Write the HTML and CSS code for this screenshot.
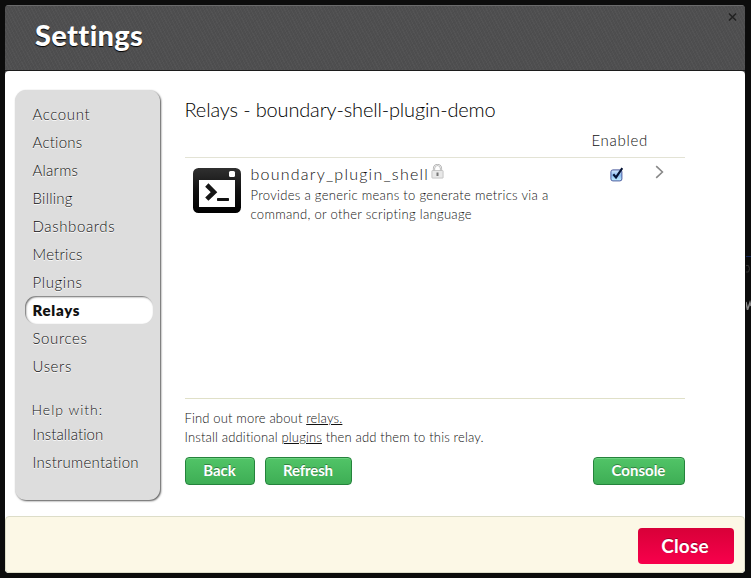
FILE: index.html
```html
<!DOCTYPE html>
<html lang="en">
<head>
<meta charset="utf-8">
<title>Settings</title>
<link rel="stylesheet" href="styles.css">
</head>
<body>
<svg class="behind" width="5" height="60" viewBox="0 0 5 60"><path d="M0 6.500h5" stroke="#14285a"/><path d="M0 15.500h2.500q2 3 0 6.500H0" fill="none" stroke="#333"/><path d="M0 52l1.500 8L4 52.500 5 56" fill="none" stroke="#8a8a8a" stroke-width="1.500"/></svg>
<div class="dialog">
  <header class="header">
    <h1>Settings</h1>
    <svg class="dismiss" width="9" height="8" viewBox="0 0 9 8"><path d="M1 .5 8 7.500M8 .5 1 7.500"/></svg>
  </header>
  <main class="body">
    <nav class="sidebar">
      <a class="item wide">Account</a>
      <a class="item">Actions</a>
      <a class="item">Alarms</a>
      <a class="item">Billing</a>
      <a class="item wide">Dashboards</a>
      <a class="item">Metrics</a>
      <a class="item wide">Plugins</a>
      <a class="item active">Relays</a>
      <a class="item wide">Sources</a>
      <a class="item wide">Users</a>
      <div class="help">Help with:</div>
      <a class="item snug">Installation</a>
      <a class="item">Instrumentation</a>
    </nav>
    <section class="content">
      <h2>Relays - boundary-shell-plugin-demo</h2>
      <div class="columns"><span>Enabled</span></div>
      <div class="list">
        <div class="row">
          <svg class="plugin-icon" width="48" height="45" viewBox="0 0 48 45">
            <defs><linearGradient id="ink" x1="0" y1="0" x2="0" y2="1"><stop offset="0" stop-color="#303030"/><stop offset=".5" stop-color="#111"/><stop offset="1" stop-color="#000"/></linearGradient></defs>
            <rect width="48" height="45" rx="5.500" fill="url(#ink)"/>
            <rect x="6" y="12" width="36" height="27" fill="#fff"/>
            <rect x="36" y="3" width="6" height="6" rx="1.500" fill="#fff"/>
            <path d="M13.800 17 21 24.200 13.800 31.200" fill="none" stroke="#161616" stroke-width="4.600"/>
            <rect x="24" y="30" width="12" height="3" rx=".7" fill="#111"/>
          </svg>
          <div class="info">
            <div class="name"><span>boundary_plugin_shell</span><svg width="13" height="15" viewBox="0 0 13 15"><path d="M3 7V4.500a3.500 3.500 0 0 1 7 0V7" fill="none" stroke="#aaa" stroke-width="2.200"/><path d="M3 7V4.500a3.500 3.500 0 0 1 7 0V7" fill="none" stroke="#eee" stroke-width=".9"/><rect x=".9" y="6.500" width="11.200" height="7.600" rx=".6" fill="#e8e8e8" stroke="#bbb" stroke-width=".8"/><path d="M5.500 8.600h2v3.400h-2z" fill="#777"/></svg></div>
            <p>Provides a generic means to generate metrics via a<br>command, or other scripting language</p>
          </div>
          <svg class="check" width="14" height="15" viewBox="0 0 14 15">
            <defs><linearGradient id="blue" x1="0" y1="0" x2="0" y2="1"><stop offset="0" stop-color="#d5e7fb"/><stop offset=".5" stop-color="#8fc0f3"/><stop offset="1" stop-color="#c4f0ff"/></linearGradient></defs>
            <rect x=".9" y="2.900" width="11" height="11" rx="2" fill="url(#blue)" stroke="#4d5c9e"/>
            <path d="M3.300 7.200 6 10.400 12.300 1.200" fill="none" stroke="#061436" stroke-width="2.100"/>
          </svg>
          <svg class="chevron" width="9" height="14" viewBox="0 0 9 14"><path d="M1.200 1.200 7.400 7 1.200 12.800"/></svg>
        </div>
      </div>
      <div class="notes">
        <div>Find out more about <u>relays.</u></div>
        <div class="install">Install additional <u>plugins</u> then add them to this relay.</div>
      </div>
      <div class="actions">
        <button class="back">Back</button>
        <button class="refresh">Refresh</button>
        <button class="console">Console</button>
      </div>
    </section>
  </main>
  <footer class="footer"><button class="close">Close</button></footer>
</div>
</body>
</html>
```
FILE: styles.css
```css
* { box-sizing: border-box; }
body {
  margin: 0;
  padding: 5px 6px 5px 5px;
  height: 578px;
  overflow: hidden;
  background: #0c0c0c;
  font-family: Lato, sans-serif;
  font-weight: 300;
  color: #111;
}
.behind { position: absolute; left: 746px; top: 250px; }
.dialog {
  width: 740px;
  height: 568px;
  display: flex;
  flex-direction: column;
  border-radius: 4px;
  overflow: hidden;
  background: #4d4d4e;
}
.header {
  height: 66px;
  padding: 12px 8px 0 30px;
  display: flex;
  justify-content: space-between;
  background:
    repeating-linear-gradient(63deg, #ffffff08 0 1px, transparent 1px 3px),
    repeating-linear-gradient(-38deg, #00000008 0 1px, transparent 1px 4px),
    #4e4e4f;
  border-top: 1px solid #6a6a6b;
  border-bottom: 1px solid #1c1c1c;
}
h1 {
  margin: 0;
  font-size: 29px;
  line-height: 33px;
  font-weight: 900;
  letter-spacing: 0.350px;
  color: #fff;
  text-shadow: 0 1px 1px #000;
}
.dismiss { margin-top: -5px; fill: none; stroke: #222; stroke-width: 1.500; }
.body {
  height: 446px;
  display: flex;
  align-items: flex-start;
  padding: 19px 0 0 10px;
  gap: 24.500px;
  background: #fff;
  border-radius: 4px 4px 0 0;
}
.sidebar {
  width: 145px;
  height: 410px;
  padding: 10px 7px 0 10px;
  background: #ddd;
  border-radius: 11px;
  box-shadow: 1px 1px 2px #555;
}
.item {
  display: block;
  height: 28px;
  padding-left: 7.500px;
  font-size: 15px;
  line-height: 28px;
  letter-spacing: 0.250px;
  text-shadow: 0 1px 0 #fff;
}
.wide { letter-spacing: 0.620px; }
.snug { letter-spacing: 0.100px; }
.active {
  height: 28px;
  border-radius: 11px;
  background: #fff;
  box-shadow: inset 1px 1px 2px #666;
  font-weight: 800;
  letter-spacing: 0.700px;
}
.help {
  margin-top: 20px;
  height: 20px;
  padding-left: 6.500px;
  font-size: 14px;
  line-height: 20px;
  letter-spacing: 1px;
  text-shadow: 0 1px 0 #fff;
}
.content { width: 500.500px; }
h2 {
  margin: 5px 0 0;
  font-size: 20px;
  line-height: 28px;
  font-weight: 300;
  letter-spacing: -0.150px;
  color: #000;
  white-space: nowrap;
}
.columns {
  height: 35px;
  padding: 5px 37px 0 0;
  text-align: right;
  font-size: 15px;
  line-height: 24px;
  letter-spacing: 0.700px;
  border-bottom: 1px solid #e3e3d5;
}
.list { height: 240px; }
.row { display: flex; padding: 10px 0 0 8.500px; }
.info { margin: -5px 0 0 9.500px; width: 360px; white-space: nowrap; }
.name { display: flex; height: 23px; font-size: 16px; line-height: 22px; letter-spacing: 1.230px; }
.name svg { margin: 1px 0 0 2px; }
.info p { margin: 0; font-size: 13px; line-height: 19px; letter-spacing: 0.310px; }
.check { margin: -1px 0 0 -0.500px; }
.chevron { margin: -3px 0 0 31px; fill: none; stroke: #888; stroke-width: 1.600; }
.notes {
  height: 58px;
  padding-top: 10px;
  border-top: 1px solid #e0e0c8;
  font-size: 13px;
  line-height: 19px;
  letter-spacing: 0.160px;
}
.actions { display: flex; gap: 10px; margin: 1px 0 0 0.500px; }
button { padding: 0; color: #fff; font-family: inherit; font-weight: 700; text-shadow: 0 -1px 0 #0005; }
.actions button {
  height: 28px;
  padding: 0 1px 1px 0;
  border: 1px solid #25833c;
  border-radius: 4px;
  background: linear-gradient(#51c467, #3eae55);
  box-shadow: inset 0 1px 0 #6cd280;
  font-size: 15px;
}
.back { width: 70px; }
.refresh { width: 87px; letter-spacing: -0.150px; }
.actions .console { width: 92px; margin-left: auto; }
.footer {
  height: 57px;
  display: flex;
  justify-content: flex-end;
  padding: 11px 10px 0;
  background: #fcf8e6;
  border: 1px solid #ddddc8;
  border-radius: 4px;
  box-shadow: 0 0 0 4px #fff;
}
.close {
  width: 96px;
  height: 36px;
  padding: 0 2px 2px 0;
  border: 0;
  border-radius: 4px;
  background: linear-gradient(#d80038, #f8004c);
  font-size: 19px;
  letter-spacing: 0.200px;
}
```
